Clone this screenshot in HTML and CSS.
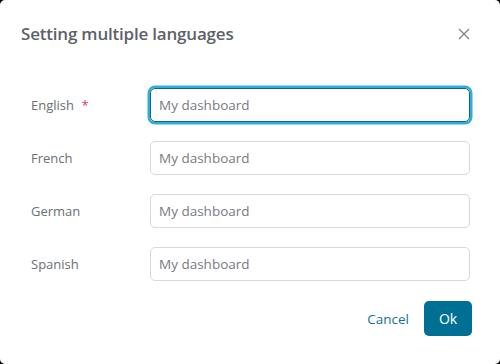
FILE: index.html
```html
<!DOCTYPE html>
<html lang="en">
<head>
<meta charset="utf-8">
<title>Setting multiple languages</title>
<link rel="stylesheet" href="styles.css">
</head>
<body>
<div class="dialog">
  <div class="header">
    <h1 class="title">Setting multiple languages</h1>
    <button class="close" aria-label="Close">
      <svg width="12" height="12" viewBox="0 0 12 12"><path d="M1 1L11 11M11 1L1 11" stroke="#80848b" stroke-width="1.4" fill="none"/></svg>
    </button>
  </div>
  <div class="form">
    <div class="row">
      <label class="label">English <span class="req">*</span></label>
      <div class="field focused">My dashboard</div>
    </div>
    <div class="row">
      <label class="label">French</label>
      <div class="field">My dashboard</div>
    </div>
    <div class="row">
      <label class="label">German</label>
      <div class="field">My dashboard</div>
    </div>
    <div class="row">
      <label class="label">Spanish</label>
      <div class="field">My dashboard</div>
    </div>
  </div>
  <div class="footer">
    <button class="btn-cancel">Cancel</button>
    <button class="btn-ok">Ok</button>
  </div>
</div>
</body>
</html>
```

FILE: styles.css
```css
html, body {
  margin: 0;
  padding: 0;
  background: #000;
}
body {
  font-family: "Open Sans", "Noto Sans", sans-serif;
}
.dialog {
  width: 500px;
  height: 364px;
  background: #fff;
  border-radius: 5px;
  box-sizing: border-box;
  display: flex;
  flex-direction: column;
}
.header {
  display: flex;
  align-items: center;
  justify-content: space-between;
  padding: 20px 29px 0 21px;
  height: 28px;
}
.title {
  margin: 0;
  font-size: 17px;
  font-weight: 600;
  color: #5d6168;
  line-height: 28px;
  letter-spacing: -0.2px;
}
.close {
  border: 0;
  background: none;
  padding: 0;
  width: 14px;
  height: 14px;
  display: flex;
  align-items: center;
  justify-content: center;
}
.form {
  display: flex;
  flex-direction: column;
  gap: 19px;
  padding: 40px 30px 0 31px;
}
.row {
  display: flex;
  align-items: center;
}
.label {
  width: 119px;
  font-size: 13px;
  color: #6b6f76;
}
.req {
  color: #e8336b;
  margin-left: 4px;
}
.field {
  flex: 1;
  height: 34px;
  box-sizing: border-box;
  border: 1px solid #d9d9d9;
  border-radius: 5px;
  padding: 0 8px;
  display: flex;
  align-items: center;
  font-size: 13.5px;
  color: #777b82;
}
.field.focused {
  border-color: #12647f;
  box-shadow: 0 0 0 2.5px #2eaedb;
}
.footer {
  display: flex;
  justify-content: flex-end;
  align-items: center;
  gap: 15px;
  padding: 20px 28px 0 0;
}
.btn-cancel {
  border: 0;
  background: none;
  padding: 0;
  font-family: inherit;
  font-size: 13.5px;
  color: #157191;
}
.btn-ok {
  border: 0;
  width: 48px;
  height: 35px;
  border-radius: 5px;
  background: #006f94;
  color: #fff;
  font-family: inherit;
  font-size: 14px;
}
```
